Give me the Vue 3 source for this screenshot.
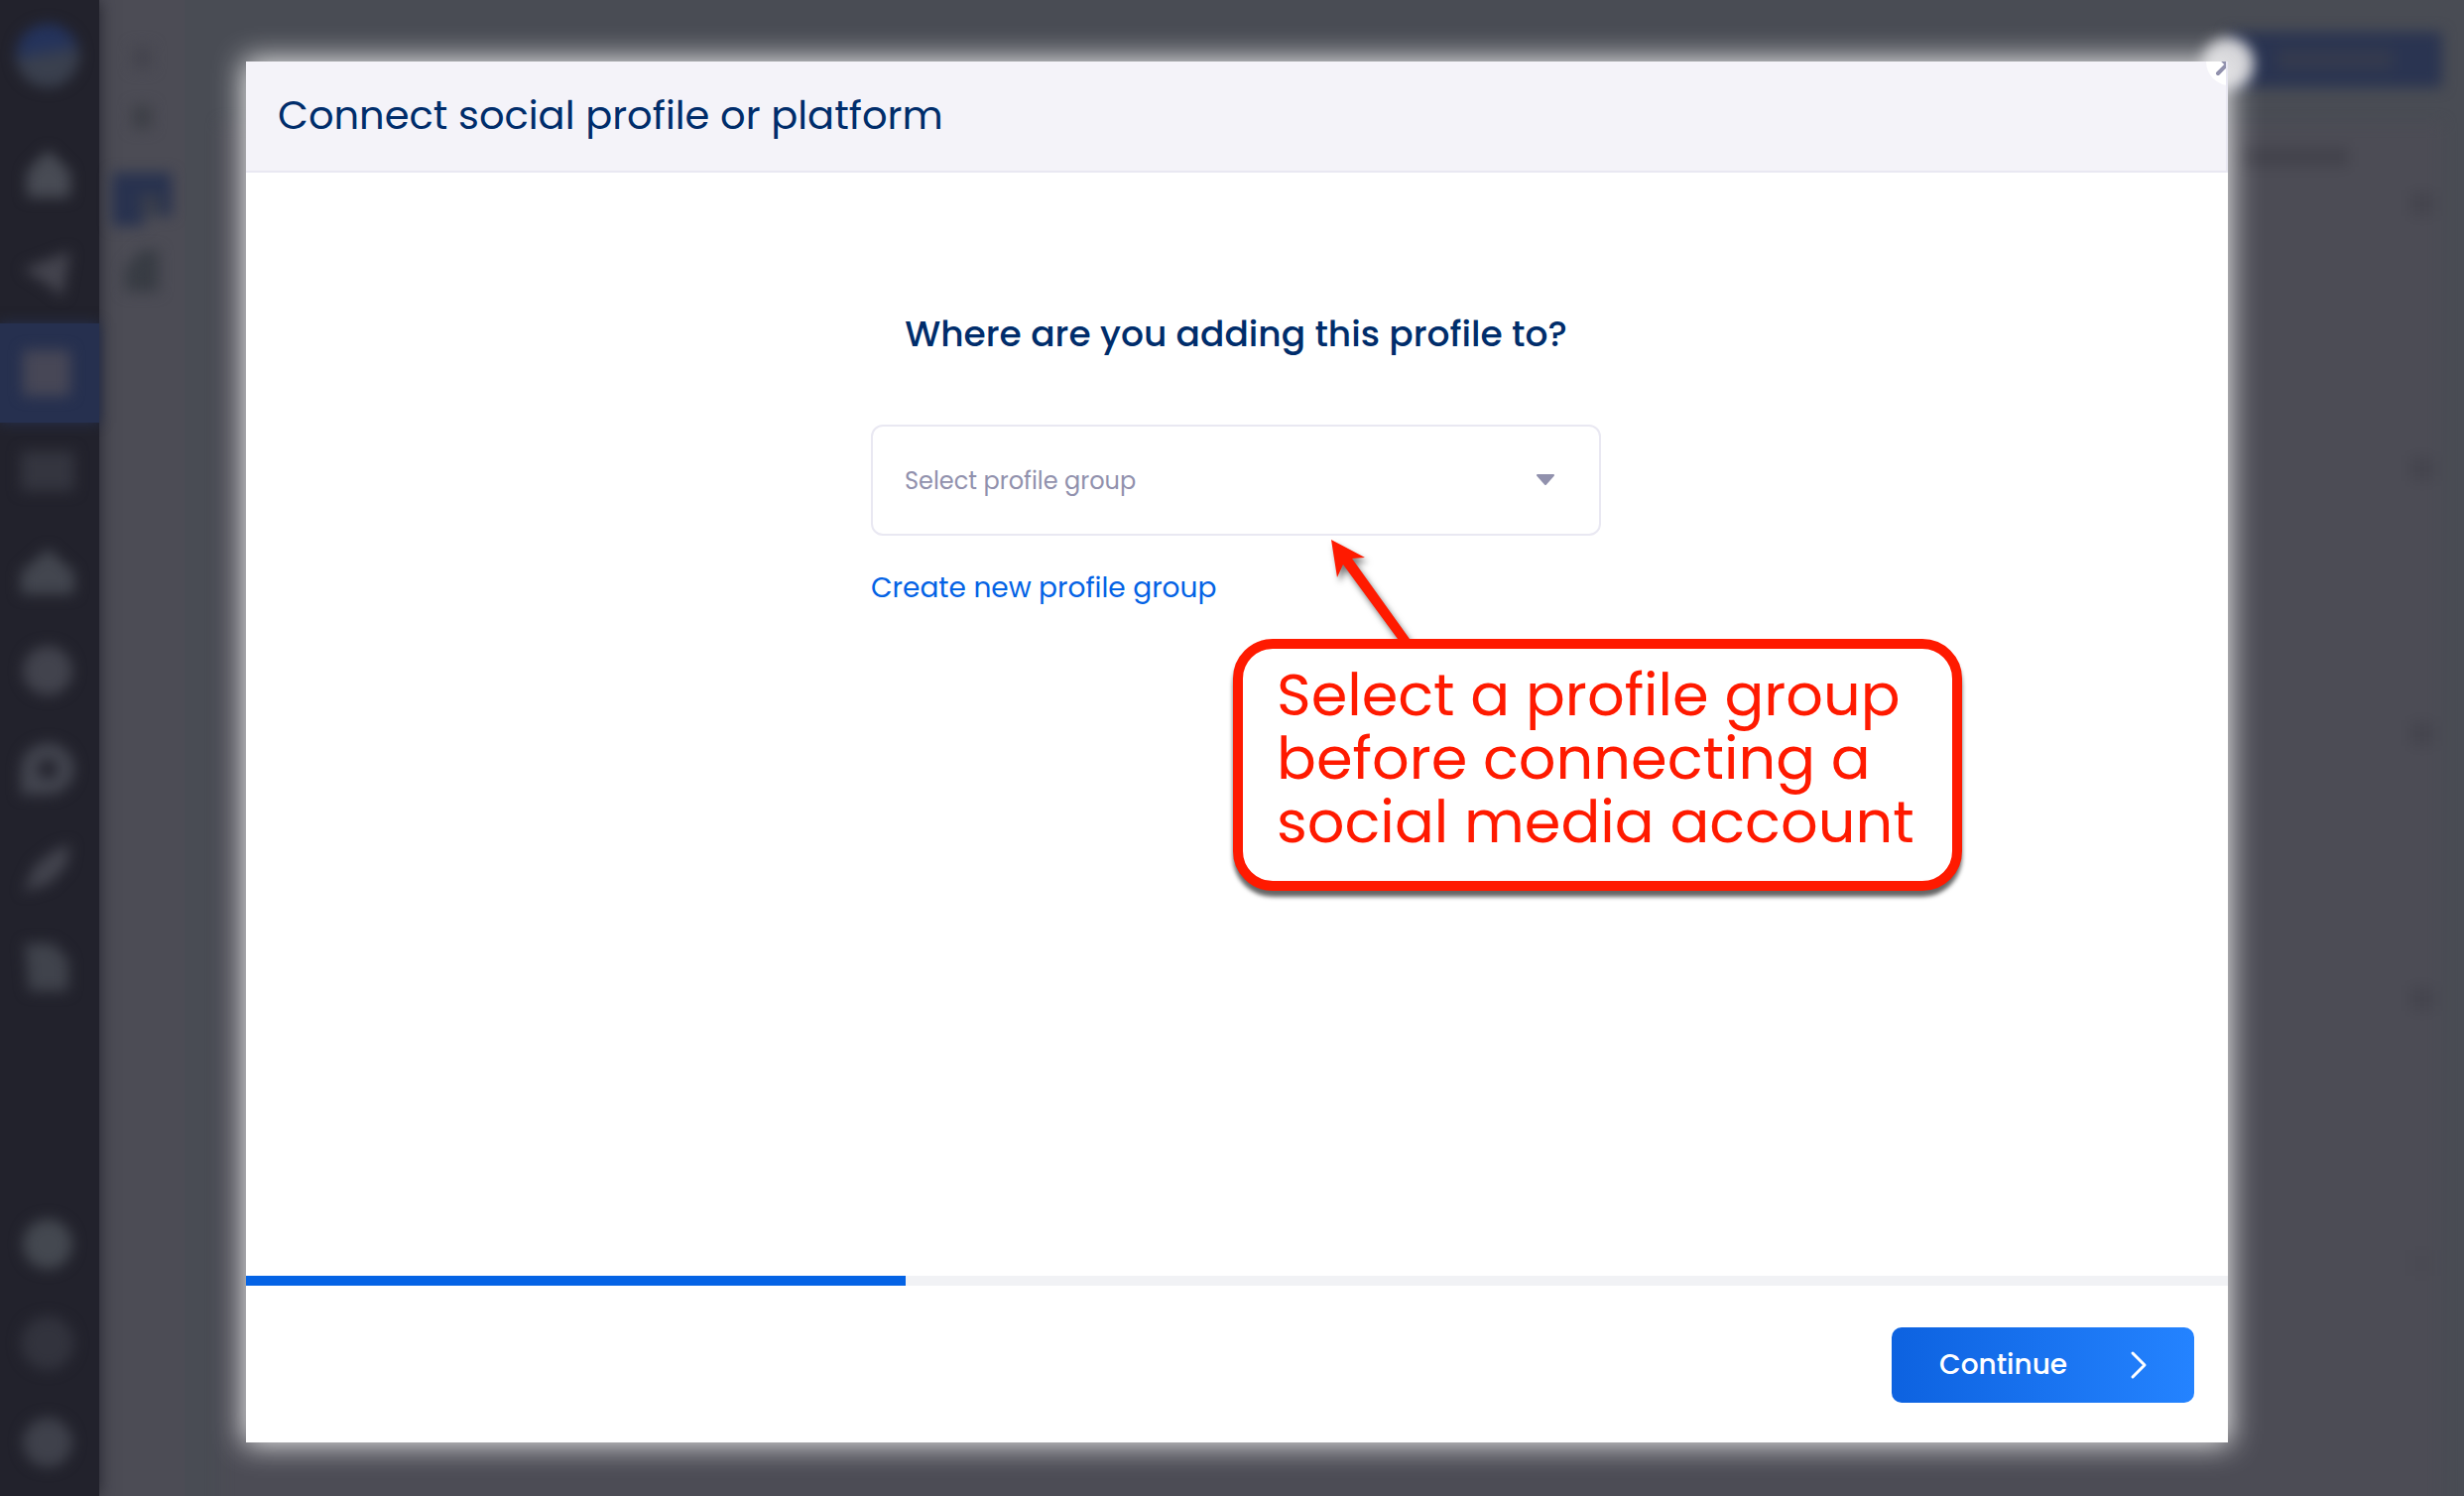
<script setup>
const nav = [
  { name: 'Home', d: 'M27 2 50 24V50H6V24z', tone: '#484b54' },
  { name: 'Publish', d: 'M2 22 50 4 42 50 24 36z', tone: '#44444e' },
  { name: 'Planner', d: 'M2 4h48v46H2z', tone: '#474756', active: true },
  { name: 'Media', d: 'M0 6h54v40H0z', tone: '#34353f' },
  { name: 'Inbox', d: 'M27 4 54 28v22H0V28z', tone: '#43464f' },
  { name: 'Discover', d: 'M27 2a25 25 0 1 1 0 50 25 25 0 1 1 0-50z', tone: '#42434d' },
  { name: 'Chat', d: 'M0 52V26a27 26 0 1 1 27 26zM27 16a10 10 0 1 0 0 20 10 10 0 1 0 0-20z', tone: '#43454f' },
  { name: 'Boost', d: 'M2 50 14 24 34 8l16-6-4 22-18 18z', tone: '#43444e' },
  { name: 'Reports', d: 'M4 2h28l16 16v32H8z', tone: '#40434c' },
]
const foot = [
  { name: 'Settings', d: 'M27 2a25 25 0 1 1 0 50 25 25 0 1 1 0-50z', tone: '#444850' },
  { name: 'Help', d: 'M27 0a27 27 0 1 1 0 54 27 27 0 1 1 0-54z', tone: '#32333d' },
  { name: 'Account', d: 'M27 2a25 25 0 1 1 0 50 25 25 0 1 1 0-50z', tone: '#3f414b' },
]
</script>

<template>
  <div class="screen">
    <div class="app" aria-hidden="true">
      <aside class="rail">
        <div class="brand"></div>
        <div v-for="item in nav" :key="item.name" class="nav-item" :class="{ active: item.active }">
          <svg width="54" height="54" viewBox="0 0 54 54"><path :d="item.d" :fill="item.tone" fill-rule="evenodd" /></svg>
        </div>
        <div class="spacer"></div>
        <div v-for="item in foot" :key="item.name" class="foot-item">
          <svg width="54" height="54" viewBox="0 0 54 54"><path :d="item.d" :fill="item.tone" /></svg>
        </div>
      </aside>
      <div class="accounts">
        <i class="dot"></i>
        <i class="dot dark"></i>
        <svg class="tile" width="64" height="58" viewBox="0 0 64 58">
          <path d="M2 2h60v44H34v10H2z" fill="#28324f" />
          <path d="M30 24h22v22H30z" fill="#383d4c" />
        </svg>
        <svg class="leaf" width="38" height="42" viewBox="0 0 38 42"><path d="M18 0h18v42H2V18z" fill="#383c44" /></svg>
      </div>
      <div class="board">
        <div class="compose"><i></i></div>
        <div class="grid">
          <div class="grid-head"><i></i></div>
          <div v-for="n in 5" :key="n" class="grid-row"><i></i></div>
        </div>
      </div>
    </div>

    <div class="stage">
      <div class="halo"></div>
      <section class="modal" role="dialog" aria-labelledby="dialog-title">
        <header class="modal-head">
          <h1 id="dialog-title">Connect social profile or platform</h1>
          <button class="close" type="button" aria-label="Close">
            <svg width="48" height="48" viewBox="0 0 48 48"><path d="M12 36 30 18M12 18l18 18" /></svg>
          </button>
        </header>

        <div class="modal-body">
          <div class="form">
            <label class="question" for="group">Where are you adding this profile to?</label>
            <div class="select-wrap">
              <select id="group">
                <option>Select profile group</option>
              </select>
              <svg class="caret" width="20" height="12" viewBox="0 0 20 12"><path d="M2 1h16l-8 9z" /></svg>
            </div>
            <a class="create" href="#">Create new profile group</a>

            <div class="callout">
              <svg class="arrow" width="98" height="102" viewBox="0 0 98 102">
                <path d="M5 2 39 20 26 21 84 102 72 102 17 27 11 40z" />
              </svg>
              <p>Select a profile group<br />before connecting a<br />social media account</p>
            </div>
          </div>
        </div>

        <div class="progress"><div class="bar"></div></div>
        <footer class="modal-foot">
          <button class="continue" type="button">
            <span>Continue</span>
            <svg width="20" height="30" viewBox="0 0 20 30"><path d="M4 3 16 15 4 27" /></svg>
          </button>
        </footer>
      </section>
    </div>
  </div>
</template>

<style>
body {
  background: #4c4c55;
}
</style>

<style scoped>
* {
  box-sizing: border-box;
}
.screen {
  position: relative;
  min-height: 100vh;
  display: flex;
  overflow: hidden;
  background: #4c4c55;
  font-family: Poppins, Inter, "Liberation Sans", sans-serif;
}
.app {
  position: absolute;
  inset: 0;
  display: flex;
}
.rail {
  width: 100px;
  display: flex;
  flex-direction: column;
  align-items: center;
  background: #22222c;
  box-shadow: 0 0 16px #22222c;
  padding: 24px 4px 4px 0;
}
.rail svg {
  filter: blur(7px);
}
.brand {
  width: 64px;
  height: 64px;
  margin-bottom: 38px;
  border-radius: 50%;
  background: linear-gradient(170deg, #24335c 35%, #3a404e 55%);
  filter: blur(7px);
}
.nav-item {
  width: 100px;
  height: 100px;
  display: grid;
  place-items: center;
  margin-right: -4px;
  padding-right: 4px;
}
.nav-item.active {
  background: #26304f;
  box-shadow: 0 0 12px #26304f;
}
.spacer {
  flex: 1;
}
.foot-item {
  height: 100px;
  display: grid;
  place-items: center;
}
.accounts {
  width: 86px;
  display: flex;
  flex-direction: column;
  align-items: center;
  padding-top: 46px;
}
.accounts i,
.accounts svg {
  display: block;
  filter: blur(7px);
}
.dot {
  width: 20px;
  height: 24px;
  margin-bottom: 36px;
  background: #45454e;
}
.dot.dark {
  background: #3e4047;
  margin-bottom: 42px;
}
.tile {
  margin-bottom: 22px;
}
.board {
  flex: 1;
  display: flex;
  flex-direction: column;
  align-items: flex-end;
  background: #494c54;
  padding: 32px 22px 0 36px;
}
.compose {
  width: 216px;
  height: 56px;
  margin-bottom: 36px;
  padding: 17px 50px;
  background: #2a3451;
  filter: blur(7px);
}
.compose i {
  display: block;
  height: 22px;
  background: #343a4e;
}
.grid {
  width: 100%;
  flex: 1;
  background: #4c4c55;
  filter: blur(7px);
}
.grid-head {
  height: 68px;
  display: flex;
  justify-content: flex-end;
  align-items: center;
  padding-right: 94px;
}
.grid-head i {
  width: 110px;
  height: 20px;
  background: #43434c;
}
.grid-row {
  height: 267px;
  display: flex;
  justify-content: flex-end;
  padding: 0 8px;
  border-top: 2px solid #4b4b54;
}
.grid-row i {
  width: 24px;
  height: 24px;
  background: #45454e;
}
.grid-row:last-child i {
  background: #4a4a53;
}
.stage {
  position: relative;
  flex: 1;
  display: flex;
  margin: 62px 238px 54px 248px;
}
.halo {
  position: absolute;
  top: -24px;
  right: -26px;
  width: 52px;
  height: 52px;
  border-radius: 50%;
  background: #d4d4d8;
  filter: blur(7px);
}
.modal {
  position: relative;
  flex: 1;
  display: flex;
  flex-direction: column;
  background: #fff;
  box-shadow: 0 0 28px 2px #eee;
}
.modal-head {
  position: relative;
  height: 112px;
  display: flex;
  align-items: center;
  overflow: hidden;
  padding: 0 32px 2px;
  background: #f4f3f9;
  border: solid #e9e8f2;
  border-width: 0 2px 2px 0;
}
h1 {
  margin: 0;
  font-size: 40px;
  line-height: 60px;
  font-weight: 400;
  color: #002d6b;
}
.close {
  position: absolute;
  top: -24px;
  right: -28px;
  width: 48px;
  height: 48px;
  padding: 0;
  border: 0;
  border-radius: 50%;
  background: #fff;
}
.close svg {
  display: block;
  fill: none;
  stroke: #9191ad;
  stroke-width: 4;
  stroke-linecap: round;
}
.modal-body {
  flex: 1;
  display: flex;
  justify-content: center;
  padding: 136px 2px 0 0;
}
.form {
  position: relative;
  width: 736px;
  display: flex;
  flex-direction: column;
  align-items: flex-start;
}
.question {
  align-self: center;
  margin-bottom: 64px;
  font-size: 36px;
  line-height: 54px;
  font-weight: 500;
  white-space: nowrap;
  color: #002d6b;
}
.select-wrap {
  position: relative;
  width: 100%;
  margin-bottom: 33px;
}
select {
  display: block;
  width: 100%;
  height: 112px;
  padding: 0 32px;
  appearance: none;
  border: 2px solid #e9e8f2;
  border-radius: 12px;
  background: #fff;
  font: inherit;
  font-size: 24px;
  color: #9191ad;
}
.caret {
  position: absolute;
  top: 50px;
  right: 46px;
  fill: #9191ad;
  stroke: #9191ad;
  stroke-width: 2;
  stroke-linejoin: round;
}
.create {
  font-size: 28px;
  line-height: 40px;
  color: #0463e5;
  text-decoration: none;
}
.callout {
  position: absolute;
  top: 334px;
  left: 365px;
  width: 735px;
  height: 254px;
  padding: 15px 34px;
  border: 10px solid #ff1a00;
  border-radius: 40px;
  background: #fff;
  box-shadow: 0 6px 4px #666;
}
.callout p {
  margin: 0;
  font-family: "Century Gothic", Poppins, Inter, sans-serif;
  font-size: 59px;
  line-height: 64px;
  white-space: nowrap;
  color: #ff1a00;
}
.arrow {
  position: absolute;
  top: -112px;
  left: 84px;
  fill: #ff1a00;
}
.arrow path {
  filter: drop-shadow(3px 5px 3px #777);
}
.progress {
  height: 10px;
  background: #f1f2f5;
}
.bar {
  width: 33.3%;
  height: 100%;
  background: #0463e5;
}
.modal-foot {
  display: flex;
  justify-content: flex-end;
  padding: 42px 34px 40px;
}
.continue {
  width: 305px;
  height: 76px;
  display: flex;
  align-items: center;
  justify-content: space-between;
  padding: 0 46px 0 48px;
  border: 0;
  border-radius: 10px;
  background: linear-gradient(90deg, #0d62e0, #2483ff);
  font: inherit;
  font-size: 28px;
  font-weight: 500;
  color: #fff;
}
.continue svg {
  fill: none;
  stroke: #fff;
  stroke-width: 3;
  stroke-linecap: round;
  stroke-linejoin: round;
}
</style>
